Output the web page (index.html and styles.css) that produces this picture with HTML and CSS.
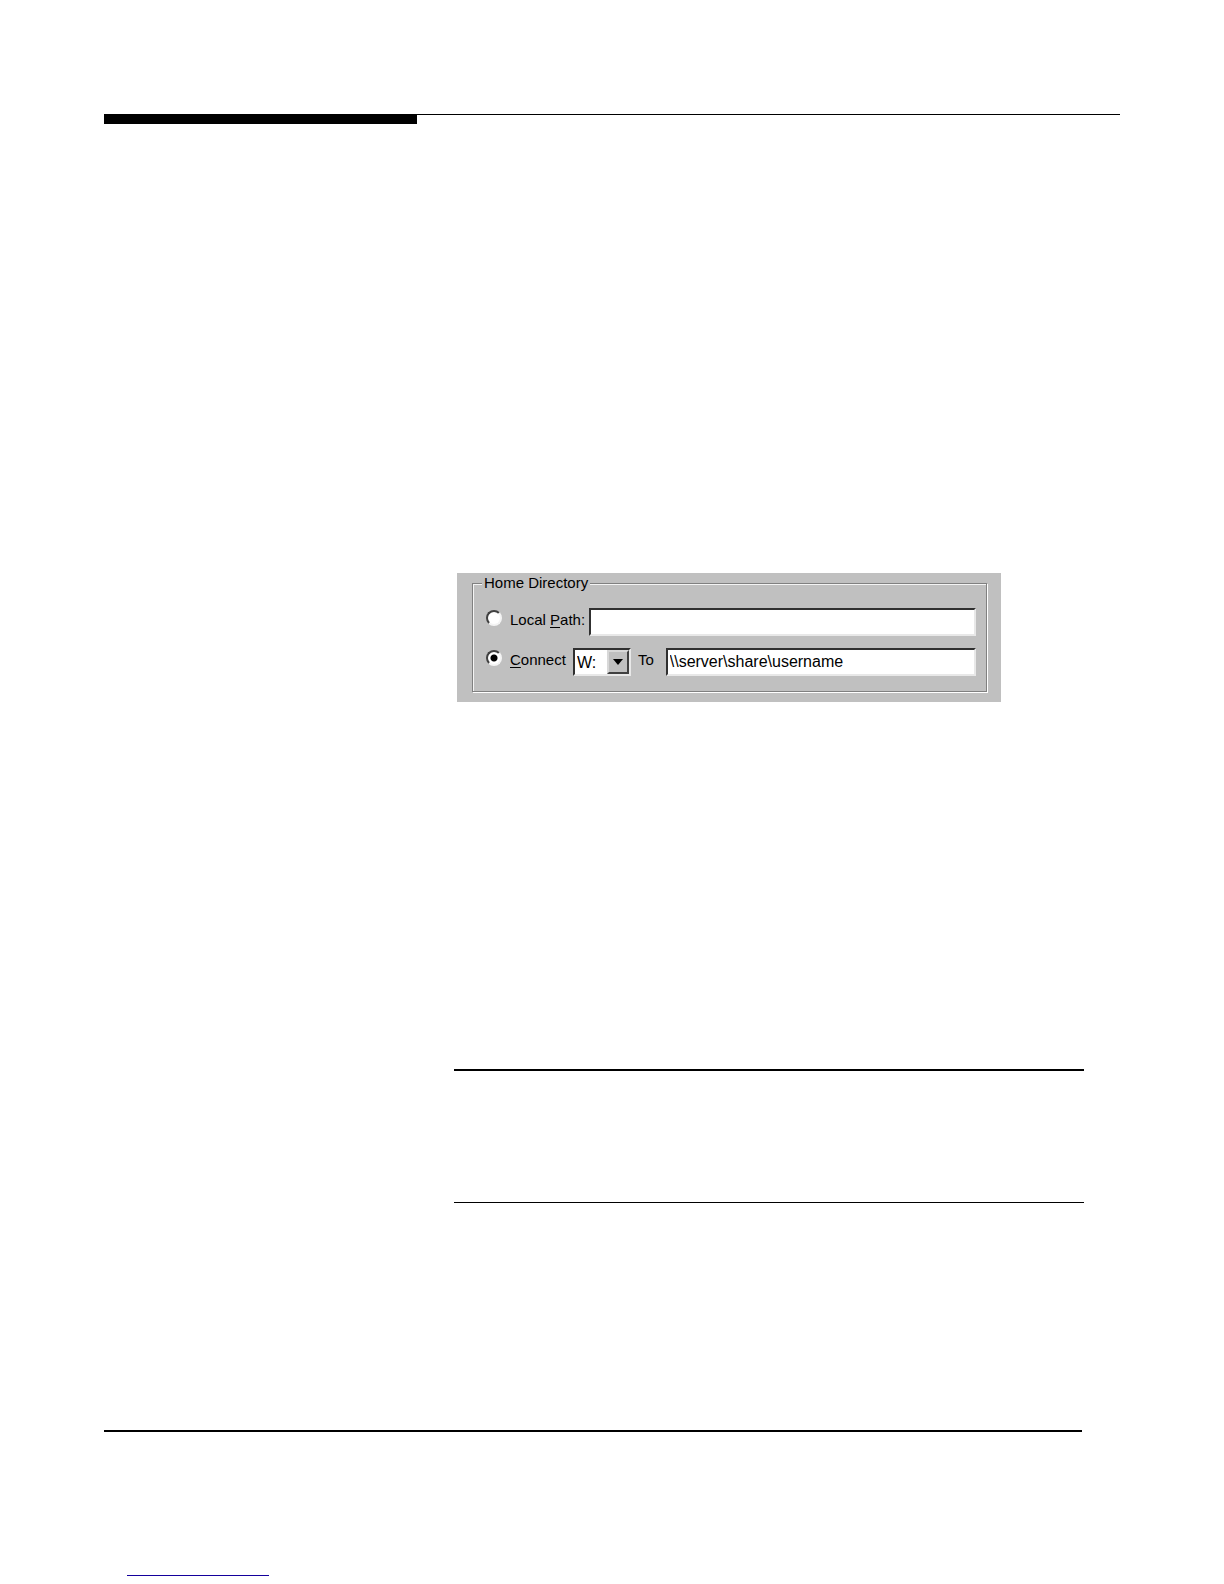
FILE: index.html
```
<!DOCTYPE html>
<html lang="en">
<head>
    <meta charset="UTF-8">
    <meta name="viewport" content="width=device-width, initial-scale=1.0">
    <title>Home Directory</title>
    <link rel="stylesheet" href="styles.css">
</head>
<body>

<header class="page-header">
    <div class="header-bar"></div>
</header>

<main class="content">
    <form class="dialog">
        <fieldset class="group">
            <legend>Home Directory</legend>
            <div class="row">
                <input type="radio" name="home" id="local">
                <label for="local" id="local-label">Local <u>P</u>ath:</label>
                <input type="text" class="field local-field" aria-labelledby="local-label">
            </div>
            <div class="row connect-row">
                <input type="radio" name="home" id="connect" checked>
                <label for="connect" id="connect-label"><u>C</u>onnect</label>
                <div class="drive">
                    <select aria-labelledby="connect-label">
                        <option>W:</option>
                    </select>
                    <span class="drive-button">
                        <svg width="10" height="6" viewBox="0 0 10 6"><path d="M0 0h10L5 6z"/></svg>
                    </span>
                </div>
                <label for="share">To</label>
                <input type="text" class="field share-field" id="share" value="\\server\share\username">
            </div>
        </fieldset>
    </form>

    <section class="note"></section>
</main>

<footer class="page-footer">
    <hr class="link-line">
</footer>

</body>
</html>
```

FILE: styles.css
```
* {
    box-sizing: border-box;
}
body {
    margin: 0;
    background: #fff;
    color: #000;
    font-family: "Liberation Sans", Arial, sans-serif;
    font-size: 15px;
}

/* Page rules */
.page-header {
    margin: 0 104px;
    padding-top: 114px;
}
.page-header::after {
    content: "";
    display: block;
    border-top: 1px solid #000;
    margin-top: -10px;
}
.header-bar {
    width: 313px;
    height: 10px;
    background: #000;
}
.content {
    margin: 458px 140px 0 454px;
}
.note {
    height: 134px;
    margin-top: 367px;
    border-top: 2px solid #000;
    border-bottom: 1px solid #000;
}
.page-footer {
    margin: 227px 142px 0 104px;
    padding-top: 143px;
    border-top: 2px solid #000;
}
.link-line {
    width: 142px;
    margin: 0 0 8px 23px;
    border: 0;
    border-top: 1px solid #14009c;
}

/* Dialog */
.dialog {
    max-width: 544px;
    margin-left: 3px;
    padding: 0 14px 10px 15px;
    background: #c0c0c0;
}
.group {
    margin: 0;
    padding: 15px 10px 15px 13px;
    border: 1px solid #808080;
    box-shadow: 1px 1px #fff, inset 1px 1px #f4f4f4;
    min-width: 0;
}
.group legend {
    margin-left: -4px;
    padding: 0 2px;
    line-height: 20px;
    background: #c0c0c0;
}
.row {
    display: flex;
    align-items: flex-start;
}
.connect-row {
    margin-top: 12px;
}
.row label {
    line-height: 24px;
    white-space: nowrap;
}
.row u {
    text-underline-offset: 2px;
}
input[type="radio"] {
    appearance: none;
    flex: none;
    width: 16px;
    height: 16px;
    margin: 2px 8px 0 0;
    border: 2px solid;
    border-color: #404040 #f4f4f4 #f4f4f4 #404040;
    border-radius: 50%;
    background: #fff;
}
input[type="radio"]:checked {
    background: radial-gradient(circle, #000 3px, #fff 4px);
}
.field,
.drive {
    height: 28px;
    border: 2px solid;
    border-color: #303030 #e8e8e8 #e8e8e8 #303030;
    background: #fff;
}
.field {
    flex: 1;
    min-width: 0;
    padding: 0 2px;
    font-family: inherit;
    font-size: 16px;
    color: #000;
}
.local-field {
    margin-left: 4px;
}
.share-field {
    margin-left: 12px;
}
.drive {
    position: relative;
    flex: none;
    width: 58px;
    margin: 0 7px;
}
.drive select {
    appearance: none;
    width: 100%;
    height: 100%;
    padding: 0 2px;
    border: 0;
    background: transparent;
    font-family: inherit;
    font-size: 16px;
    color: #000;
}
.drive-button {
    position: absolute;
    top: 0;
    right: 0;
    display: flex;
    align-items: center;
    justify-content: center;
    width: 22px;
    height: 24px;
    border: 2px solid;
    border-color: #d8d8d8 #404040 #404040 #d8d8d8;
    background: #c0c0c0;
    pointer-events: none;
}
```
